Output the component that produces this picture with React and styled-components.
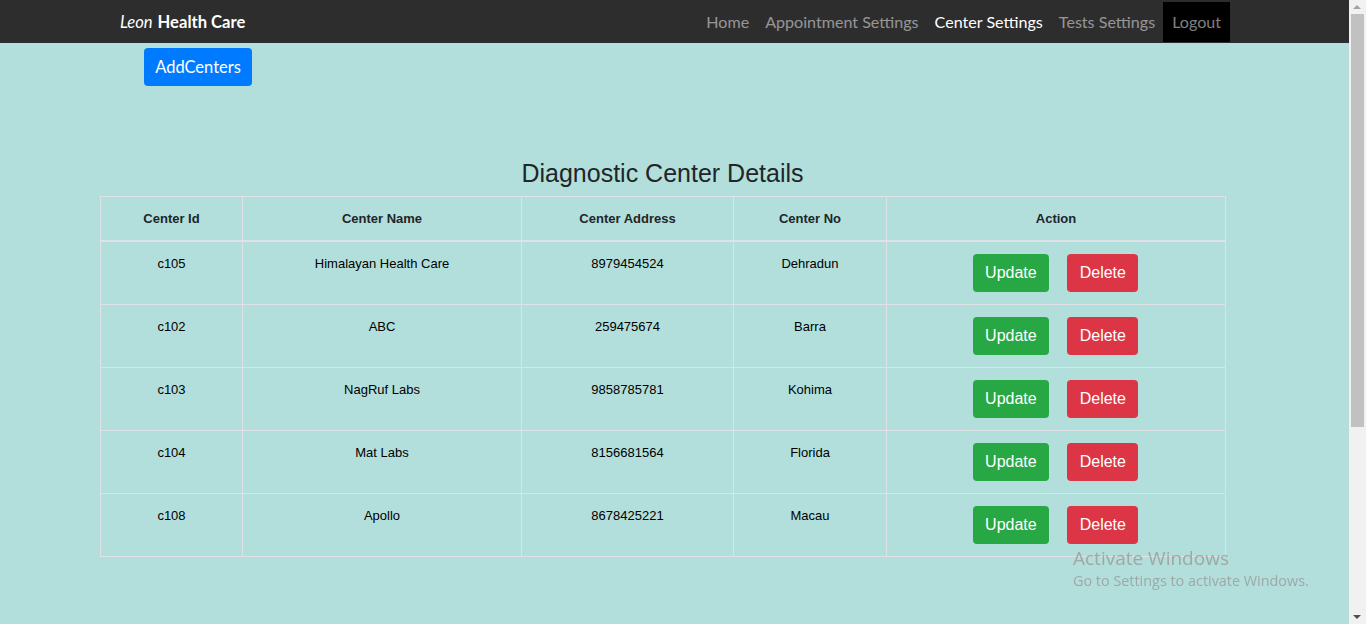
import React from "react";
import styled, { createGlobalStyle } from "styled-components";

const Global = createGlobalStyle`
  body {
    margin: 0;
    padding-right: 17px;
    background: #b2dfdb;
    font-family: "Liberation Sans", Arial, sans-serif;
    color: #212529;
    overflow: hidden;
  }
  * { box-sizing: border-box; }
`;

const Nav = styled.nav`
  height: 43px;
  background: #2d2d2d;
  display: flex;
  align-items: center;
  justify-content: space-between;
  padding: 0 119px 0 120px;
  font-family: Lato, "Open Sans", sans-serif;
`;

const Brand = styled.div`
  color: #fff;
  font-size: 16.6px;
  display: flex;
  gap: 5px;
  em { font-style: italic; font-weight: 400; }
  b { font-weight: 700; }
`;

const Links = styled.div`
  display: flex;
  align-items: stretch;
  height: 40px;
  margin-top: 1px;
`;

const NavLink = styled.a`
  display: flex;
  align-items: center;
  padding: 0 ${(p) => (p.$dark ? "9px" : "8px")} 1px;
  font-size: 16.1px;
  color: ${(p) => (p.$active ? "#fff" : "rgba(255,255,255,0.5)")};
  background: ${(p) => (p.$dark ? "#000" : "transparent")};
  text-decoration: none;
`;

const Main = styled.main`
  padding: 5px 0 0 100px;
`;

const AddButton = styled.button`
  margin-left: 44px;
  height: 38px;
  width: 108px;
  border: none;
  border-radius: 4px;
  background: #007bff;
  color: #fff;
  font-family: Lato, "Open Sans", sans-serif;
  font-size: 16.5px;
  padding: 0 0 1px;
`;

const Section = styled.section`
  width: 1125px;
  margin-top: 72px;
`;

const Title = styled.h2`
  margin: 0 0 8px;
  font-size: 25px;
  font-weight: 400;
  line-height: 30px;
  text-align: center;
  color: #212529;
`;

const Table = styled.table`
  width: 1125px;
  border-collapse: collapse;
  font-size: 13px;
  line-height: 19px;
  text-align: center;
  table-layout: fixed;
`;

const Th = styled.th`
  border: 1px solid #dee2e6;
  border-bottom: 2px solid #dee2e6;
  padding: 12px;
  font-weight: 700;
  color: #212529;
`;

const Td = styled.td`
  border: 1px solid #dee2e6;
  padding: 12px;
  line-height: 20px;
  vertical-align: top;
  color: #000;
  height: 63px;
`;

const ActionCell = styled(Td)`
  padding: 12px 0;
`;

const Actions = styled.div`
  display: flex;
  justify-content: center;
  gap: 18px;
  padding-right: 1px;
`;

const Btn = styled.button`
  height: 38px;
  padding: 0 12.5px;
  border: none;
  border-radius: 4px;
  font-family: "Liberation Sans", Arial, sans-serif;
  font-size: 16px;
  color: #fff;
  background: ${(p) => p.$bg};
`;

const Watermark = styled.div`
  position: fixed;
  left: 1073px;
  top: 547px;
  color: rgba(150, 150, 150, 0.75);
  font-family: "Open Sans", sans-serif;
  line-height: 1.2;
  div:first-child { font-size: 19px; }
  div:last-child { font-size: 14.4px; margin-top: 2px; }
`;

const Scrollbar = styled.div`
  position: fixed;
  top: 0;
  right: 0;
  width: 17px;
  height: 100%;
  background: #f1f1f1;
`;

const Thumb = styled.div`
  position: absolute;
  left: 2px;
  top: 14px;
  width: 13px;
  height: 413px;
  background: #c1c1c1;
`;

const Arrow = styled.div`
  position: absolute;
  left: 4px;
  width: 0;
  height: 0;
  border-left: 4.5px solid transparent;
  border-right: 4.5px solid transparent;
  ${(p) =>
    p.$up
      ? "top: 5px; border-bottom: 4px solid #a3a3a3;"
      : "bottom: 5px; border-top: 4px solid #505050;"}
`;

const rows = [
  ["c105", "Himalayan Health Care", "8979454524", "Dehradun"],
  ["c102", "ABC", "259475674", "Barra"],
  ["c103", "NagRuf Labs", "9858785781", "Kohima"],
  ["c104", "Mat Labs", "8156681564", "Florida"],
  ["c108", "Apollo", "8678425221", "Macau"],
];

const widths = [142, 279, 212, 153, 339];

export default function App() {
  return (
    <>
      <Global />
      <Nav>
        <Brand>
          <em>Leon</em>
          <b>Health Care</b>
        </Brand>
        <Links>
          <NavLink>Home</NavLink>
          <NavLink>Appointment Settings</NavLink>
          <NavLink $active>Center Settings</NavLink>
          <NavLink>Tests Settings</NavLink>
          <NavLink $dark>Logout</NavLink>
        </Links>
      </Nav>
      <Main>
        <AddButton>AddCenters</AddButton>
        <Section>
          <Title>Diagnostic Center Details</Title>
          <Table>
            <colgroup>
              {widths.map((w, i) => (
                <col key={i} style={{ width: w }} />
              ))}
            </colgroup>
            <thead>
              <tr>
                <Th>Center Id</Th>
                <Th>Center Name</Th>
                <Th>Center Address</Th>
                <Th>Center No</Th>
                <Th>Action</Th>
              </tr>
            </thead>
            <tbody>
              {rows.map((r) => (
                <tr key={r[0]}>
                  {r.map((c, i) => (
                    <Td key={i}>{c}</Td>
                  ))}
                  <ActionCell>
                    <Actions>
                      <Btn $bg="#28a745">Update</Btn>
                      <Btn $bg="#dc3545">Delete</Btn>
                    </Actions>
                  </ActionCell>
                </tr>
              ))}
            </tbody>
          </Table>
        </Section>
      </Main>
      <Watermark>
        <div>Activate Windows</div>
        <div>Go to Settings to activate Windows.</div>
      </Watermark>
      <Scrollbar>
        <Arrow $up />
        <Thumb />
        <Arrow />
      </Scrollbar>
    </>
  );
}
